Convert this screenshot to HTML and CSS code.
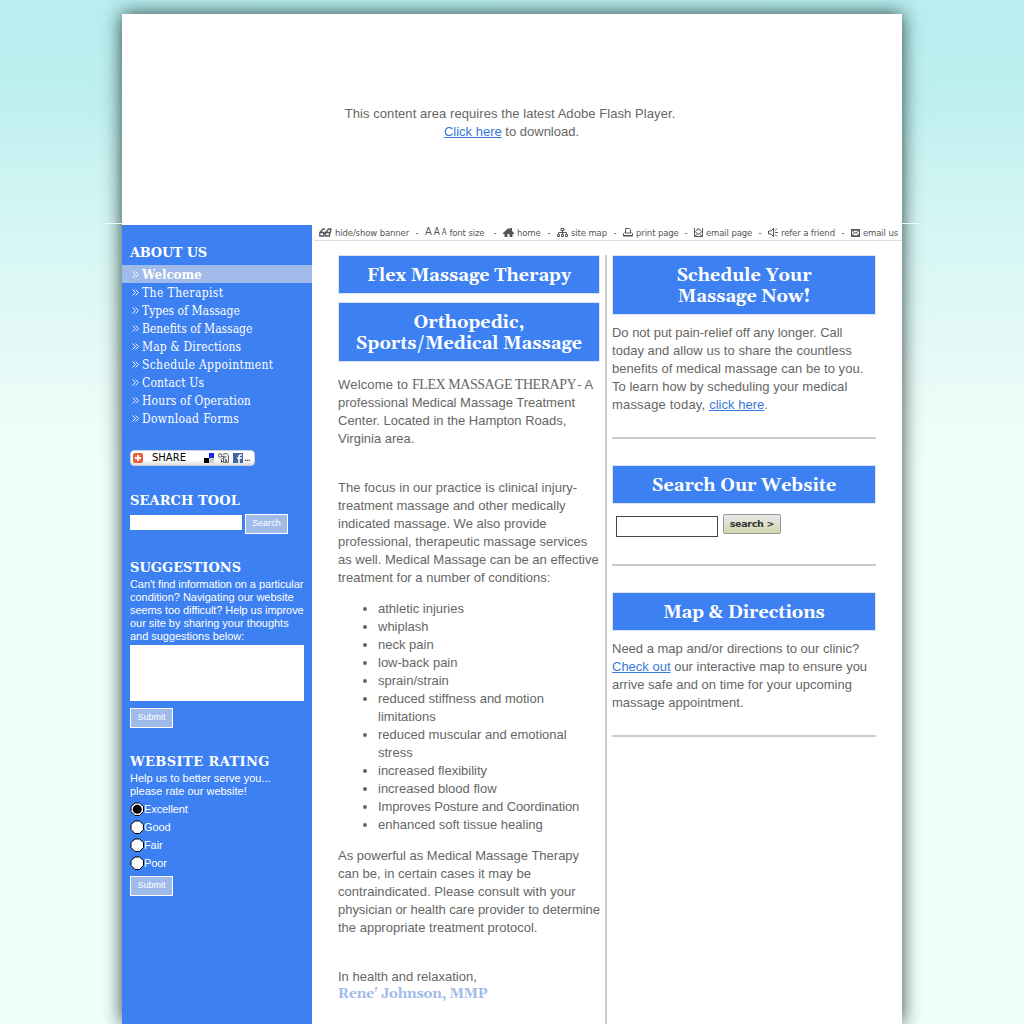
FILE: index.html
```html
<!DOCTYPE html>
<html lang="en">
<head>
<meta charset="utf-8">
<title>Flex Massage Therapy</title>
<link rel="stylesheet" href="styles.css">
</head>
<body>
<svg class="defs" width="0" height="0" aria-hidden="true"><symbol id="chev" viewBox="0 0 7 7"><path d="M.5.500l3 3-3 3M3.500.500l3 3-3 3" fill="none" stroke="#fff" stroke-width=".9"/></symbol><symbol id="radio" viewBox="0 0 14 14"><path d="M5 1h4.500L13.500 4.500v5L9.500 13.500H5L1 9.500v-5z" fill="#fff" stroke="#000"/></symbol></svg>
<div class="page">
  <header class="banner">
    <p><span class="flash">This content area requires the latest Adobe Flash Player.</span><br><span class="download"><a href="#">Click here</a> to download.</span></p>
  </header>
  <div class="columns">
    <aside class="sidebar">
      <h2>ABOUT US</h2>
      <ul class="nav">
        <li class="current"><svg width="7" height="7"><use href="#chev"/></svg><span>Welcome</span></li>
        <li class="w4"><svg width="7" height="7"><use href="#chev"/></svg><span>The Therapist</span></li>
        <li><svg width="7" height="7"><use href="#chev"/></svg><span>Types of Massage</span></li>
        <li><svg width="7" height="7"><use href="#chev"/></svg><span>Benefits of Massage</span></li>
        <li class="w1"><svg width="7" height="7"><use href="#chev"/></svg><span>Map &amp; Directions</span></li>
        <li class="w3"><svg width="7" height="7"><use href="#chev"/></svg><span>Schedule Appointment</span></li>
        <li class="w1"><svg width="7" height="7"><use href="#chev"/></svg><span>Contact Us</span></li>
        <li class="w2"><svg width="7" height="7"><use href="#chev"/></svg><span>Hours of Operation</span></li>
        <li class="w3"><svg width="7" height="7"><use href="#chev"/></svg><span>Download Forms</span></li>
      </ul>
      <div class="share">
        <svg class="plus" width="10" height="10" viewBox="0 0 10 10"><rect width="10" height="10" rx="2" fill="#ee6038"/><path d="M5 2v6M2 5h6" stroke="#fff" stroke-width="2"/></svg>
        <span class="share-text">SHARE</span>
        <svg width="10" height="10" viewBox="0 0 10 10"><path fill="#fff" d="M0 0h5v5H0z"/><path fill="#2222f0" d="M5 0h5v5H5z"/><path d="M0 5h5v5H0z"/><path fill="#ccc" d="M5 5h5v5H5z"/></svg>
        <svg width="11" height="10" viewBox="0 0 11 10" fill="none" stroke="#555" stroke-width=".9"><path fill="#eee" stroke="none" d="M0 0h11v10H0z"/><circle cx="2.200" cy="2.500" r="1.700"/><path d="M3.500 3.500h3l-3 3v3l2-2M5 1.500L7 .5h1.500l2 2v7h-2v-3h-1v3h-2v-4l3-2"/></svg>
        <svg width="10" height="10" viewBox="0 0 10 10"><path fill="#4267a8" d="M0 0h10v10H0z"/><path d="M9 2H7.500Q6 2 6 4v6M4 5h5" stroke="#fff" stroke-width="1.600" fill="none"/></svg>
        <span class="dots">...</span>
      </div>
      <h2 class="h-search">SEARCH TOOL</h2>
      <div class="search-row"><input type="text" class="field" aria-label="Search"><button class="pale">Search</button></div>
      <h2 class="h-sugg">SUGGESTIONS</h2>
      <p class="small narrow"><span>Can't find information on a particular</span><br><span class="wide">condition? Navigating our website</span><br><span>seems too difficult? Help us improve</span><br><span class="wide">our site by sharing your thoughts</span><br><span class="wide">and suggestions below:</span></p>
      <textarea class="box" aria-label="Suggestions"></textarea>
      <button class="pale submit">Submit</button>
      <h2 class="h-rating">WEBSITE RATING</h2>
      <p class="small"><span>Help us to better serve you...</span><br><span>please rate our website!</span></p>
      <div class="rating">
        <label><svg width="14" height="14" viewBox="0 0 14 14"><use href="#radio"/><circle cx="7.250" cy="7.250" r="4.500"/></svg>Excellent</label>
        <label><svg width="14" height="14"><use href="#radio"/></svg>Good</label>
        <label><svg width="14" height="14"><use href="#radio"/></svg>Fair</label>
        <label><svg width="14" height="14"><use href="#radio"/></svg>Poor</label>
      </div>
      <button class="pale">Submit</button>
    </aside>
    <div class="content">
      <nav class="tools">
        <span class="tool t-banner"><svg width="13" height="9" viewBox="0 0 13 9" fill="none" stroke="#555" stroke-width="1.300"><path d="M.8 4.500h4v3.500h-4zM6.500 4.500h4v3.500h-4zM5 5.500h1.500M1 4.500L4 1h2M6.800 4.500L9.500 1h3M11.700 1v2l-1 3"/></svg>hide/show banner</span><b>-</b>
        <span class="tool t-font"><span class="aaa"><span class="a1">A</span><span class="a2">A</span><span class="a3">A</span></span>font size</span><b>-</b>
        <span class="tool t-home"><svg width="11" height="9" viewBox="0 0 11 9" fill="#555"><path d="M5.500 0L7 1.300V0h2v3l2 2v1H9.500v3h-3V6h-2v3h-3V6H0V5z"/></svg>home</span><b>-</b>
        <span class="tool t-map"><svg width="11" height="9" viewBox="0 0 11 9" fill="none" stroke="#555"><path d="M4 .5h3v2H4zM5.500 3v3M1.500 6V4.500h8V6M.5 6.500h2v2h-2zM4.500 6.500h2v2h-2zM8.500 6.500h2v2h-2z"/></svg>site map</span><b>-</b>
        <span class="tool t-print"><svg width="10" height="9" viewBox="0 0 10 9" fill="none" stroke="#555"><path d="M2.500 5V.5h4l1 1V5M1.500 4.500l-1 1v2h9v-2l-1-1"/><path d="M0 8h10M2 5h6"/></svg>print page</span><b>-</b>
        <span class="tool t-epage"><svg width="9" height="9" viewBox="0 0 9 9" fill="none" stroke="#555"><path d="M.5 0v8.500h8V0M.5 3l3.500 3h1l3.500-3M.5 8.500L3.500 6M8.500 8.500L5.500 6M2.500 3L3.500 1h2l1 2"/></svg>email page</span><b>-</b>
        <span class="tool t-refer"><svg width="10" height="9" viewBox="0 0 10 9" fill="none" stroke="#555"><path d="M5.500 0v9M5 1L3 3H.5v3H3l2 2M7 4.500h3M7 2.500l2-2M7 6.500l2 2"/></svg>refer a friend</span><b>-</b>
        <span class="tool t-email"><svg width="9" height="8" viewBox="0 0 9 8" fill="none" stroke="#555"><path d="M.5 1h8v6h-8zM.5 1l3.500 3h1l3.500-3M.5 7L3 4M8.500 7L6 4" /><path d="M0 .7h9M0 7.200h9" stroke-width="1.400"/></svg>email us</span>
      </nav>
      <div class="main">
        <main class="left">
          <h1><span>Flex Massage Therapy</span></h1>
          <h1 class="second"><span>Orthopedic,</span><br><span>Sports/Medical Massage</span></h1>
          <p class="p1"><span class="wide">Welcome to </span><em>FLEX MASSAGE THERAPY</em>- A<br><span>professional Medical Massage Treatment</span><br><span>Center. Located in the Hampton Roads,</span><br><span>Virginia area.</span></p>
          <p class="p2"><span class="line-wide">The focus in our practice is clinical injury-</span><br><span>treatment massage and other medically</span><br><span>indicated massage. We also provide</span><br><span>professional, therapeutic massage services</span><br><span>as well. Medical Massage can be an effective</span><br><span>treatment for a number of conditions:</span></p>
          <ul class="conditions">
            <li>athletic injuries</li><li>whiplash</li><li>neck pain</li><li>low-back pain</li><li>sprain/strain</li>
            <li>reduced stiffness and motion<br>limitations</li><li>reduced muscular and emotional<br>stress</li>
            <li>increased flexibility</li><li>increased blood flow</li><li class="tight">Improves Posture and Coordination</li><li>enhanced soft tissue healing</li>
          </ul>
          <p><span>As powerful as Medical Massage Therapy</span><br><span>can be, in certain cases it may be</span><br><span class="line-wide">contraindicated. Please consult with your</span><br><span class="line-tight">physician or health care provider to determine</span><br><span>the appropriate treatment protocol.</span></p>
          <p class="sign">In health and relaxation,<br><strong>Rene' Johnson, MMP</strong></p>
        </main>
        <section class="right">
          <article class="card c1"><h1>Schedule Your<br>Massage Now!</h1>
          <p><span class="tight">Do not put pain-relief off any longer. Call</span><br>today and allow us to share the countless<br>benefits of medical massage can be to you.<br>To learn how by scheduling your medical<br><span class="wide">massage today, </span><a href="#">click here</a>.</p></article>
          <article class="card c2"><h1>Search Our Website</h1>
          <div class="site-search"><input type="text" aria-label="Search our website"><button>search &gt;</button></div></article>
          <article class="card c3"><h1>Map &amp; Directions</h1>
          <p>Need a map and/or directions to our clinic?<br><a href="#">Check out</a> our interactive map to ensure you<br>arrive safe and on time for your upcoming<br>massage appointment.</p></article>
        </section>
      </div>
    </div>
  </div>
</div>
</body>
</html>
```
FILE: styles.css
```css
* { box-sizing: border-box; }
svg { flex: none; }
.defs { position: absolute; }
html { height: 1024px; overflow: hidden; }
body { margin: 0; height: 1024px; overflow: hidden; padding-top: 14px; font: 13px/18px "Liberation Sans", Arial, sans-serif; color: #666; background: linear-gradient(#b8eef0 0, #beeff0 90px, #d4f6f3 224px, #e6faf7 360px, #f1fff9 460px, #f1fff9 100%); white-space: nowrap; }
p, h1, h2, ul { margin: 0; padding: 0; }
a { color: #3878d8; text-decoration: underline; }
.page { position: relative; width: 780px; height: 1010px; margin: 0 auto; background: #fff; box-shadow: 0 0 18px rgba(0, 20, 20, .8); }
/* hairlines that run out from the bottom edge of the banner */
.page::before, .page::after { content: ""; position: absolute; top: 209px; width: 18px; height: 1px; background: #e4fbf9; }
.page::before { left: -18px; }
.page::after { right: -18px; }
.banner { height: 211px; padding: 91px 4px 0 0; text-align: center; }
.flash { letter-spacing: .07px; }
.download { margin-left: 3px; }
.columns { display: flex; height: 799px; }
.sidebar { width: 190px; background: #3c80f2; color: #fff; padding: 18px 0 0 8px; }
.sidebar h2 { height: 18px; padding-top: 1px; font: bold 13px/18px "DejaVu Serif", serif; letter-spacing: -.25px; }
.nav { list-style: none; margin: 4px 0 0 -8px; }
.nav li { display: flex; align-items: center; gap: 3px; height: 18px; padding: 2px 0 0 10px; font: 12px/18px "DejaVu Serif Condensed", "DejaVu Serif", serif; }
.nav svg { margin-top: -2px; }
.nav .current { background: #a0baea; font: bold 12px/18px "DejaVu Serif", serif; letter-spacing: -.1px; }
.w1 { letter-spacing: .12px; } .w2 { letter-spacing: .17px; } .w3 { letter-spacing: .34px; } .w4 { letter-spacing: .4px; }
.share { display: flex; align-items: center; width: 125px; height: 16px; margin-top: 23px; background: linear-gradient(#fff 65%, #ddd); border: 1px solid #c8d0dc; border-radius: 4px; color: #000; padding-left: 2px; }
.share-text { font: 10px/12px "DejaVu Sans", sans-serif; width: 61px; padding-left: 9px; }
.share svg + svg { margin-left: 4px; }
.dots { font: 10px/12px "DejaVu Sans Condensed", sans-serif; margin-left: 1px; letter-spacing: -.9px; }
.sidebar .h-search { margin-top: 25px; letter-spacing: .1px; }
.search-row { display: flex; gap: 3px; margin-top: 5px; }
.field { width: 112px; height: 15px; margin: 1px 0 0; padding: 0; border: 0; background: #fff; }
.pale { display: block; width: 43px; height: 20px; margin: 0; border: 1px solid #fff; padding: 0 0 3px; background: #a0baea; color: #fff; font: 9px/14px "Liberation Sans", sans-serif; }
.sidebar .h-sugg { margin-top: 24px; letter-spacing: .05px; }
.small { font-size: 11px; line-height: 13px; margin-top: 2px; }
.narrow { letter-spacing: -.08px; }
.small .wide { letter-spacing: -.03px; }
.box { display: block; width: 174px; height: 56px; margin: 2px 0 7px; border: 0; padding: 0; background: #fff; resize: none; }
.sidebar .h-rating { margin-top: 24px; letter-spacing: .42px; }
.rating { font-size: 11px; margin: 2px 0 4px; }
.rating label { display: flex; align-items: center; height: 18px; letter-spacing: -.1px; }
.content { width: 590px; }
.tools { display: flex; align-items: center; height: 16px; margin-left: 2px; border-bottom: 1px solid #ddd; padding-left: 5px; font: 9.5px/14px "DejaVu Sans Condensed", sans-serif; letter-spacing: -.15px; color: #555; }
.tool { display: flex; align-items: center; gap: 3px; flex: none; }
.t-banner { width: 90px; } .t-font { width: 62px; } .t-home { width: 38px; } .t-map { width: 50px; }
.t-print { width: 55px; } .t-epage { width: 58px; } .t-refer { width: 67px; } .t-email { width: 48px; }
.tools b { font-weight: normal; width: 16px; text-align: center; flex: none; }
.a1 { font-size: 11px; } .a2 { font-size: 10px; margin: 0 2px; } .a3 { font-size: 8px; }
.main { display: flex; margin: 14px 0 0 26px; }
.left { width: 269px; height: 780px; border-right: 2px solid #ccc; }
h1 { width: 262px; padding: 9px 0 7px; font: bold 18px/21px Gelasio, Georgia, "Liberation Serif", serif; color: #fff; background: #3c80f2; border: 1px solid #dce4f4; text-align: center; }
.second { margin-top: 8px; }
.p1 { margin-top: 14px; }
.p1 em { font: 14px/17px "Liberation Serif", serif; letter-spacing: -.45px; margin-right: 1px; }
.wide { letter-spacing: .18px; }
.tight { letter-spacing: -.1px; }
.line-wide { letter-spacing: .05px; }
.line-tight { letter-spacing: -.04px; }
.p2 { margin-top: 31px; }
.conditions { margin: 13px 0; padding-left: 40px; }
.sign { margin-top: 31px; }
.sign strong { font: bold 14px/16px Gelasio, Georgia, "Liberation Serif", serif; letter-spacing: -.2px; color: #a0baea; display: block; }
.right { width: 264px; margin-left: 5px; }
.right h1 { width: 264px; }
.card { border-bottom: 2px solid #ccc; margin-bottom: 26px; }
.card p { margin-top: 9px; }
.c1 p { letter-spacing: .03px; }
.c1 .tight { letter-spacing: -.03px; }
.c1 { height: 184px; } .c2 { height: 101px; } .c3 { height: 145px; }
.site-search { display: flex; padding: 10px 0 0 4px; gap: 5px; }
.site-search input { width: 102px; height: 21px; margin: 2px 0 0; border: 1px solid #444; background: #fff; }
.site-search button { width: 58px; height: 20px; padding: 0; border: 1px solid #999; border-radius: 2px; background: linear-gradient(#e8e8e8, #d0d8b0); color: #333; font: bold 9.5px/14px "DejaVu Sans", sans-serif; letter-spacing: -.3px; }
```
